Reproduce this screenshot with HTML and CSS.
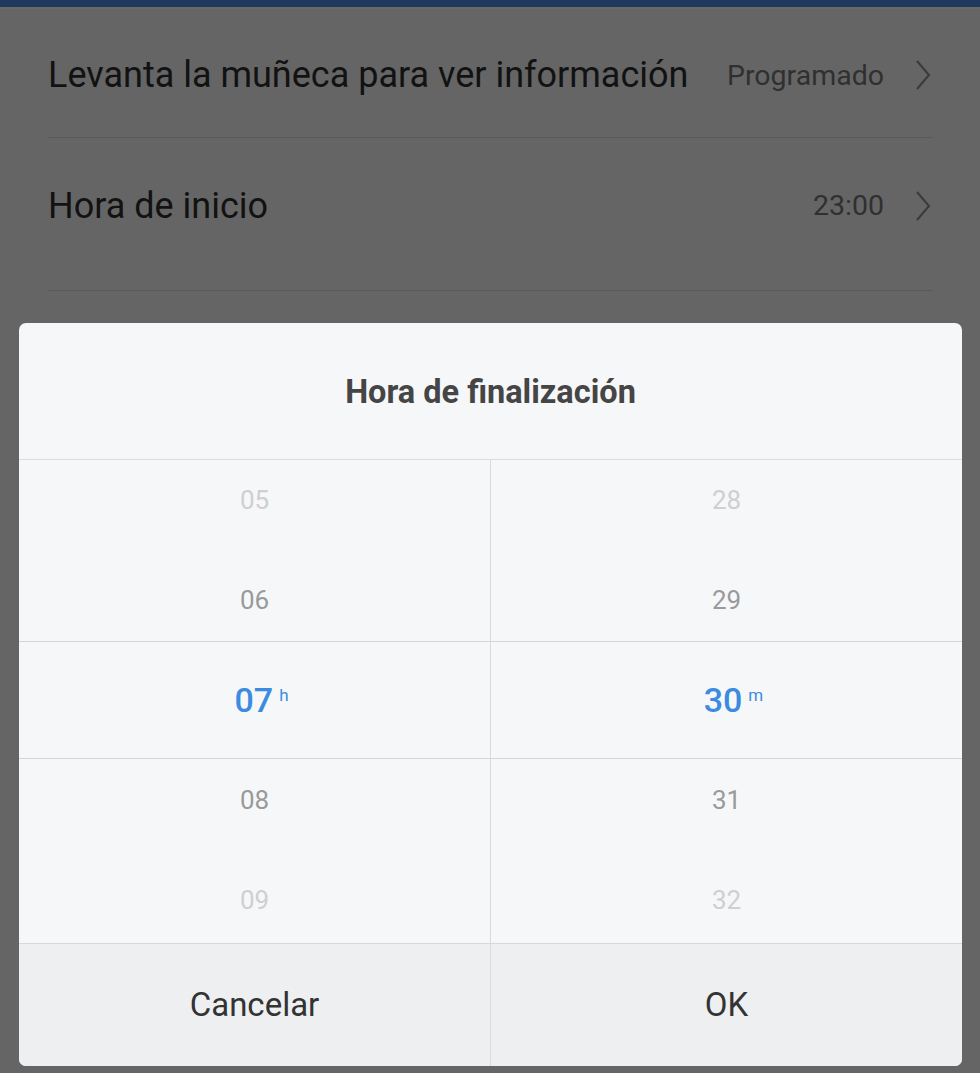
FILE: index.html
```html
<!DOCTYPE html>
<html lang="es">
<head>
<meta charset="utf-8">
<title>Hora de finalización</title>
<link rel="stylesheet" href="styles.css">
</head>
<body>
<div class="statusbar"></div>
<div class="list">
  <div class="row row-first">
    <span class="label">Levanta la muñeca para ver información</span>
    <span class="value">Programado</span>
    <svg class="chev" viewBox="0 0 16 30" width="16" height="30"><polyline points="2,1 14,15 2,29" fill="none" stroke="#3a3a3a" stroke-width="2"/></svg>
  </div>
  <div class="row row-second">
    <span class="label">Hora de inicio</span>
    <span class="value">23:00</span>
    <svg class="chev" viewBox="0 0 16 30" width="16" height="30"><polyline points="2,1 14,15 2,29" fill="none" stroke="#3a3a3a" stroke-width="2"/></svg>
  </div>
</div>

<div class="dialog">
  <div class="dialog-title">Hora de finalización</div>
  <div class="picker">
    <div class="col">
      <div class="item far">05</div>
      <div class="item near">06</div>
      <div class="item sel">07<span class="unit">h</span></div>
      <div class="item near">08</div>
      <div class="item far">09</div>
    </div>
    <div class="col">
      <div class="item far">28</div>
      <div class="item near">29</div>
      <div class="item sel">30<span class="unit">m</span></div>
      <div class="item near">31</div>
      <div class="item far">32</div>
    </div>
    <div class="band"></div>
  </div>
  <div class="buttons">
    <div class="btn">Cancelar</div>
    <div class="btn">OK</div>
  </div>
</div>
</body>
</html>
```
FILE: styles.css
```css
html, body {
  margin: 0;
  padding: 0;
}
body {
  background: #656565;
  width: 980px;
  height: 1073px;
  overflow: hidden;
  font-family: Roboto, "Liberation Sans", sans-serif;
  position: relative;
}
.statusbar {
  height: 7px;
  background: #1d3a5c;
  border-bottom: 2px solid #6c6864;
}
.list {
  padding: 0 47px 0 48px;
}
.row {
  display: flex;
  align-items: center;
  border-bottom: 1px solid #5a5a5a;
  box-sizing: border-box;
}
.row-first {
  height: 129px;
  padding-top: 4px;
}
.row-second {
  height: 153px;
  padding-bottom: 17px;
}
.label {
  flex: 1;
  font-size: 36px;
  color: #121212;
  white-space: nowrap;
}
.value {
  font-size: 28.5px;
  color: #303030;
  margin-right: 31px;
}
.chev {
  display: block;
  margin-right: 2px;
}
.dialog {
  position: absolute;
  left: 19px;
  top: 323px;
  width: 943px;
  height: 743px;
  background: #f6f7f9;
  border-radius: 7px;
  overflow: hidden;
  display: flex;
  flex-direction: column;
}
.dialog-title {
  height: 137px;
  flex: none;
  display: flex;
  align-items: center;
  justify-content: center;
  font-weight: bold;
  font-size: 32.5px;
  color: #454545;
  border-bottom: 1px solid #dcdcde;
  box-sizing: border-box;
  padding-top: 2px;
}
.picker {
  height: 483px;
  flex: none;
  display: grid;
  grid-template-columns: 471px 1fr;
  position: relative;
  overflow: hidden;
}
.col {
  display: flex;
  flex-direction: column;
  margin-top: -10px;
}
.col + .col {
  border-left: 1px solid #dadadc;
}
.item {
  height: 100px;
  flex: none;
  display: flex;
  align-items: center;
  justify-content: center;
  font-size: 26px;
}
.far {
  color: #cfcfd1;
}
.near {
  color: #9a9a9a;
}
.sel {
  color: #3c8be0;
  font-size: 34px;
  font-weight: 500;
  position: relative;
}
.unit {
  font-size: 17px;
  font-weight: 400;
  align-self: flex-start;
  margin-top: 35px;
  margin-left: 6px;
  margin-right: -14px;
}
.band {
  position: absolute;
  left: 0;
  right: 0;
  top: 181px;
  height: 118px;
  border-top: 1px solid #d6d6d8;
  border-bottom: 1px solid #d6d6d8;
  box-sizing: border-box;
  pointer-events: none;
}
.buttons {
  flex: 1;
  display: grid;
  grid-template-columns: 471px 1fr;
  background: #eeeff1;
  border-top: 1px solid #d8d8da;
}
.btn {
  display: flex;
  align-items: center;
  justify-content: center;
  font-size: 33px;
  color: #333333;
  padding-bottom: 2px;
}
.btn + .btn {
  border-left: 1px solid #dadadc;
}
```
